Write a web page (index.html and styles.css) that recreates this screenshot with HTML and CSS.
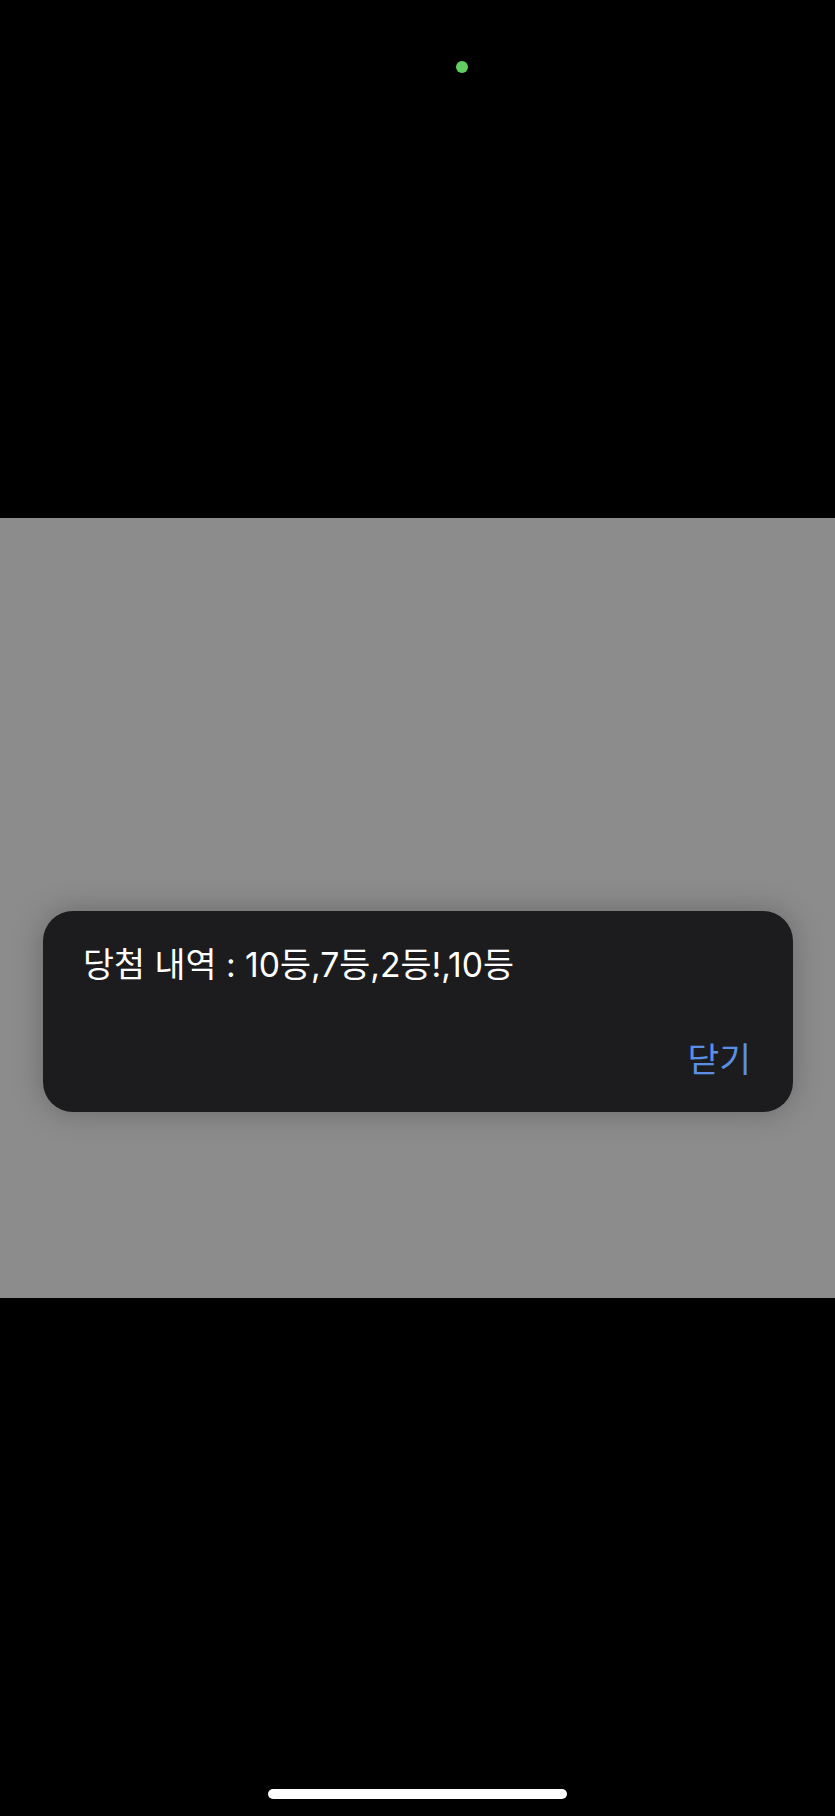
FILE: index.html
```html
<!DOCTYPE html>
<html lang="ko">
<head>
<meta charset="utf-8">
<title>당첨 내역</title>
<link rel="stylesheet" href="styles.css">
</head>
<body>
<div class="screen">
  <div class="top">
    <span class="dot"></span>
  </div>
  <div class="band">
    <div class="dialog">
      <p class="message">당첨 내역 : 10등,7등,2등!,10등</p>
      <div class="actions">
        <span class="close">닫기</span>
      </div>
    </div>
  </div>
  <div class="bottom">
    <span class="home-bar"></span>
  </div>
</div>
</body>
</html>
```
FILE: styles.css
```css
html, body {
  margin: 0;
  padding: 0;
  background: #000;
}
.screen {
  width: 835px;
  height: 1816px;
  display: flex;
  flex-direction: column;
  font-family: "Inter", "Noto Sans CJK KR", "Noto Sans", sans-serif;
  overflow: hidden;
}
.top {
  height: 518px;
  box-sizing: border-box;
  padding-top: 61px;
  display: flex;
  justify-content: flex-start;
  padding-left: 456px;
}
.dot {
  width: 12px;
  height: 12px;
  border-radius: 50%;
  background: #5fcf60;
}
.band {
  height: 780px;
  background: #8c8c8c;
  box-sizing: border-box;
  padding: 393px 42px 0 43px;
}
.dialog {
  height: 201px;
  box-sizing: border-box;
  background: #1c1c1e;
  border-radius: 30px;
  box-shadow: 0 0 30px rgba(0, 0, 0, 0.25);
  padding: 32px 42px 0 40px;
  display: flex;
  flex-direction: column;
}
.message {
  margin: 0;
  color: #fff;
  font-size: 33.7px;
  line-height: 44px;
  letter-spacing: 0;
}
.actions {
  display: flex;
  justify-content: flex-end;
  margin-top: 51px;
}
.close {
  color: #5a8fe3;
  font-size: 34.5px;
  line-height: 44px;
}
.bottom {
  flex: 1;
  display: flex;
  justify-content: flex-start;
  padding-left: 268px;
  padding-top: 491px;
  box-sizing: border-box;
}
.home-bar {
  width: 299px;
  height: 10px;
  border-radius: 5px;
  background: #fff;
}
```
